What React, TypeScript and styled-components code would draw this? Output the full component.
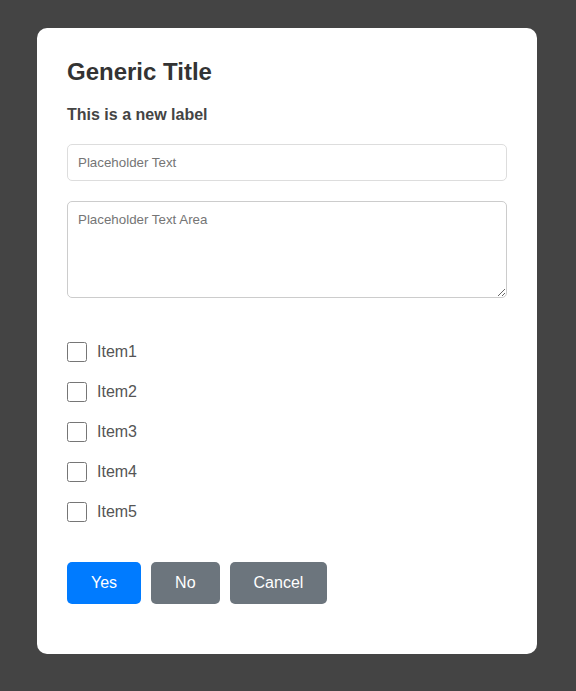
import styled, { createGlobalStyle } from "styled-components";

const GlobalStyle = createGlobalStyle`
  html, body {
    margin: 0;
    padding: 0;
    background-color: #444444;
    font-family: "Liberation Sans", Arial, sans-serif;
  }
`;

const Page = styled.div`
  min-height: 691px;
  padding: 28px 2px 0 0;
  box-sizing: border-box;
`;

const Card = styled.form`
  width: 500px;
  margin: 0 auto;
  box-sizing: border-box;
  padding: 30px 30px 50px;
  background-color: #ffffff;
  border-radius: 10px;
  display: flex;
  flex-direction: column;
`;

const Title = styled.h2`
  margin: 0 0 20px;
  font-size: 24px;
  font-weight: bold;
  color: #333333;
`;

const Label = styled.label`
  display: block;
  margin-bottom: 20px;
  font-size: 16px;
  font-weight: bold;
  color: #444444;
`;

const TextInput = styled.input`
  display: block;
  width: 100%;
  height: 37px;
  box-sizing: border-box;
  margin: 0 0 20px;
  padding: 10px;
  border: 1px solid #dddddd;
  border-radius: 5px;
  font-family: "Liberation Sans", Arial, sans-serif;
  font-size: 13.33px;
  &::placeholder {
    color: #757575;
  }
`;

const TextArea = styled.textarea`
  display: block;
  width: 100%;
  height: 97px;
  box-sizing: border-box;
  margin: 0 0 44px;
  padding: 10px;
  border: 1px solid #cccccc;
  border-radius: 5px;
  font-family: "Liberation Sans", Arial, sans-serif;
  font-size: 13.33px;
  &::placeholder {
    color: #757575;
  }
`;

const CheckList = styled.div`
  display: flex;
  flex-direction: column;
  gap: 20px;
  margin-bottom: 40px;
`;

const CheckRow = styled.label`
  display: flex;
  align-items: center;
  height: 20px;
  font-size: 16px;
  color: #555555;
`;

const Box = styled.input`
  width: 20px;
  height: 20px;
  margin: 0 10px 0 0;
`;

const Buttons = styled.div`
  display: flex;
  gap: 10px;
`;

const Button = styled.button<{ $primary?: boolean }>`
  height: 42px;
  padding: 0 24px;
  border: none;
  border-radius: 5px;
  background-color: ${(p) => (p.$primary ? "#007bff" : "#6c757d")};
  color: #ffffff;
  font-family: "Liberation Sans", Arial, sans-serif;
  font-size: 16px;
  cursor: pointer;
`;

const items = ["Item1", "Item2", "Item3", "Item4", "Item5"];

export default function App() {
  return (
    <>
      <GlobalStyle />
      <Page>
        <Card onSubmit={(e) => e.preventDefault()}>
          <Title>Generic Title</Title>
          <Label>This is a new label</Label>
          <TextInput type="text" placeholder="Placeholder Text" />
          <TextArea placeholder="Placeholder Text Area" />
          <CheckList>
            {items.map((item) => (
              <CheckRow key={item}>
                <Box type="checkbox" />
                {item}
              </CheckRow>
            ))}
          </CheckList>
          <Buttons>
            <Button type="button" $primary>
              Yes
            </Button>
            <Button type="button">No</Button>
            <Button type="button">Cancel</Button>
          </Buttons>
        </Card>
      </Page>
    </>
  );
}
